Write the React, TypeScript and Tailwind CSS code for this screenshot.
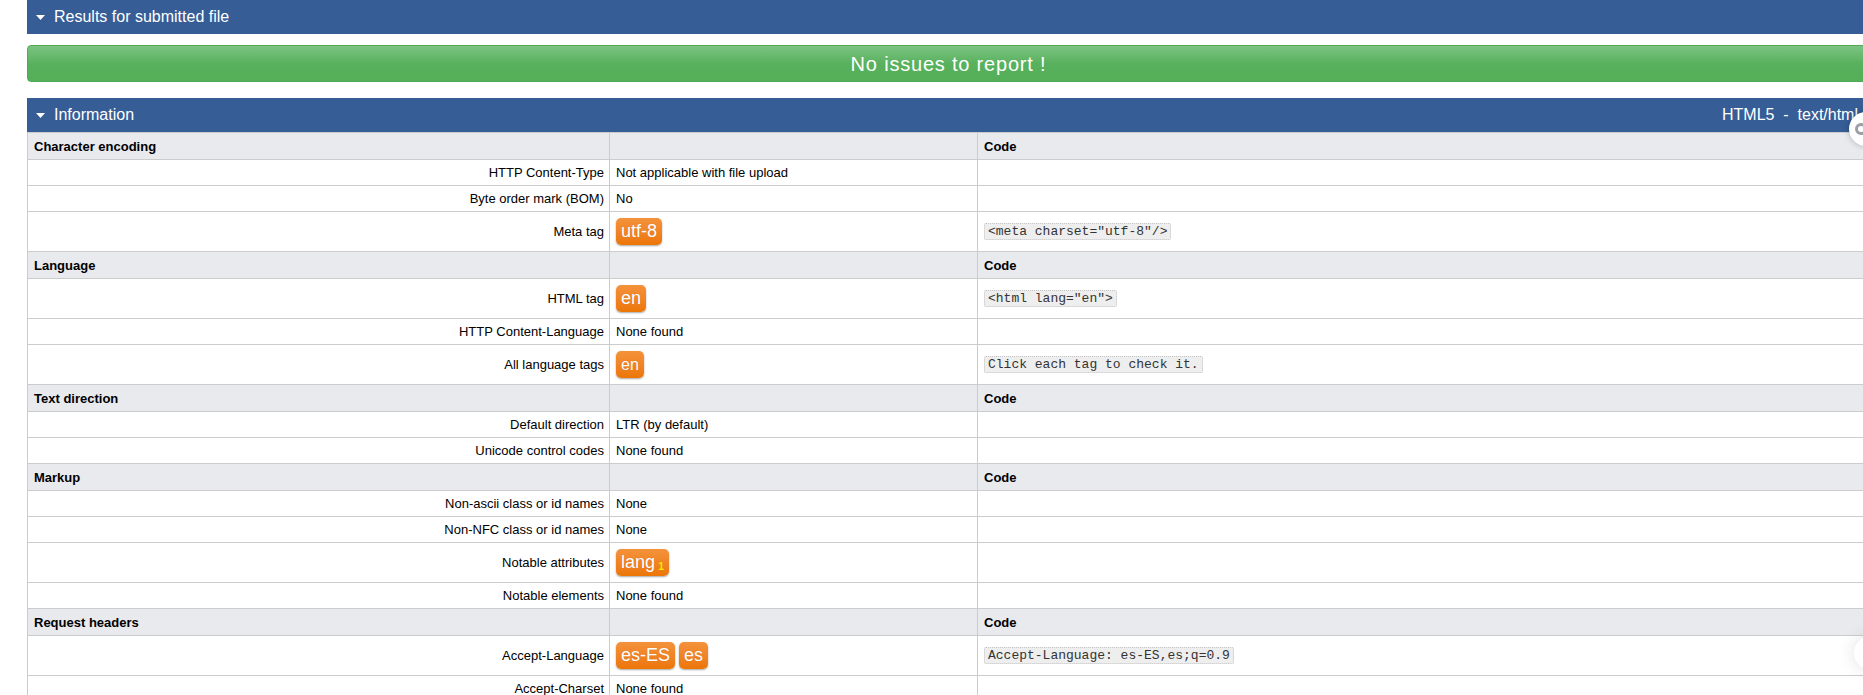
import React from "react";

type Cell = { kind: "text"; text: string } | { kind: "badges"; items: { label: string; sub?: string; small?: boolean }[] };

type Row =
  | { type: "head"; title: string }
  | { type: "item"; label: string; value: Cell; code?: string };

const rows: Row[] = [
  { type: "head", title: "Character encoding" },
  { type: "item", label: "HTTP Content-Type", value: { kind: "text", text: "Not applicable with file upload" } },
  { type: "item", label: "Byte order mark (BOM)", value: { kind: "text", text: "No" } },
  { type: "item", label: "Meta tag", value: { kind: "badges", items: [{ label: "utf-8" }] }, code: '<meta charset="utf-8"/>' },
  { type: "head", title: "Language" },
  { type: "item", label: "HTML tag", value: { kind: "badges", items: [{ label: "en" }] }, code: '<html lang="en">' },
  { type: "item", label: "HTTP Content-Language", value: { kind: "text", text: "None found" } },
  { type: "item", label: "All language tags", value: { kind: "badges", items: [{ label: "en", small: true }] }, code: "Click each tag to check it." },
  { type: "head", title: "Text direction" },
  { type: "item", label: "Default direction", value: { kind: "text", text: "LTR (by default)" } },
  { type: "item", label: "Unicode control codes", value: { kind: "text", text: "None found" } },
  { type: "head", title: "Markup" },
  { type: "item", label: "Non-ascii class or id names", value: { kind: "text", text: "None" } },
  { type: "item", label: "Non-NFC class or id names", value: { kind: "text", text: "None" } },
  { type: "item", label: "Notable attributes", value: { kind: "badges", items: [{ label: "lang", sub: "1" }] } },
  { type: "item", label: "Notable elements", value: { kind: "text", text: "None found" } },
  { type: "head", title: "Request headers" },
  { type: "item", label: "Accept-Language", value: { kind: "badges", items: [{ label: "es-ES" }, { label: "es" }] }, code: "Accept-Language: es-ES,es;q=0.9" },
  { type: "item", label: "Accept-Charset", value: { kind: "text", text: "None found" } },
];

function Caret() {
  return (
    <svg width="9" height="5" viewBox="0 0 9 5" className="shrink-0">
      <polygon points="0,0 9,0 4.5,5" fill="#ffffff" />
    </svg>
  );
}

function SectionBar({ title, right }: { title: string; right?: string }) {
  return (
    <div className="flex h-[34px] items-center bg-[#365d96] pl-[9px] pr-[12px] text-[16px] text-white">
      <Caret />
      <span className="ml-[9px]">{title}</span>
      {right && <span className="ml-auto whitespace-pre">{right}</span>}
    </div>
  );
}

function Badge({ label, sub, small }: { label: string; sub?: string; small?: boolean }) {
  return (
    <span
      className={
        "inline-flex h-[27px] items-center rounded-[5px] bg-gradient-to-b from-[#f4923a] to-[#ec7604] text-white shadow-[0_1px_2px_rgba(0,0,0,0.35)] [text-shadow:0_0_1px_rgba(0,0,0,0.15)] " +
        (small ? "px-[5px] text-[16px]" : "px-[5px] text-[18px]")
      }
    >
      {label}
      {sub && <span className="ml-[3px] mt-[7px] text-[11px] font-bold text-[#ffe600]">{sub}</span>}
    </span>
  );
}

export default function App() {
  return (
    <div className="relative h-[695px] w-[1863px] overflow-hidden bg-white font-['Liberation_Sans',Arial,sans-serif] text-black">
      <div className="ml-[27px] w-[1843px]">
        <SectionBar title="Results for submitted file" />

        <div className="mt-[11px] flex h-[37px] items-center justify-center rounded-[4px] border border-[#4fa955] bg-gradient-to-b from-[#7cc383] via-[#58b15d] to-[#54af59] text-[20px] tracking-[0.04em] text-white">
          No issues to report !
        </div>

        <div className="mt-[16px]">
          <SectionBar title="Information" right="HTML5  -  text/html" />
          <table className="w-full table-fixed border-collapse text-[13px] leading-[15px]">
            <colgroup>
              <col className="w-[582px]" />
              <col className="w-[368px]" />
              <col />
            </colgroup>
            <tbody>
              {rows.map((row, i) =>
                row.type === "head" ? (
                  <tr key={i} className="h-[27px] bg-[#e9eaee]">
                    <td className="border border-[#cccccc] px-[6px] font-bold">{row.title}</td>
                    <td className="border border-[#cccccc]"></td>
                    <td className="border border-[#cccccc] px-[6px] font-bold">Code</td>
                  </tr>
                ) : (
                  <tr key={i} className={row.value.kind === "badges" ? "h-[40px]" : "h-[26px]"}>
                    <td className="border border-[#cccccc] px-[5px] text-right">{row.label}</td>
                    <td className="border border-[#cccccc] px-[6px]">
                      {row.value.kind === "text" ? (
                        row.value.text
                      ) : (
                        <div className="flex gap-[4px]">
                          {row.value.items.map((b) => (
                            <Badge key={b.label} {...b} />
                          ))}
                        </div>
                      )}
                    </td>
                    <td className="border border-[#cccccc] px-[6px]">
                      {row.code && (
                        <code className="inline-block rounded-[2px] border border-dotted border-[#c4c4c4] bg-[#eeeeee] px-[3px] font-['Liberation_Mono','Courier_New',monospace] text-[13px] leading-[15px] text-[#333333]">
                          {row.code}
                        </code>
                      )}
                    </td>
                  </tr>
                )
              )}
            </tbody>
          </table>
        </div>
      </div>

      {/* floating extension buttons at the right edge */}
      <div className="absolute left-[1849px] top-[112px] flex h-[34px] w-[34px] items-center rounded-full bg-white pl-[6px] shadow-[0_0_6px_rgba(0,0,0,0.25)]">
        <span className="block h-[12px] w-[12px] rounded-full border-[3px] border-[#9aa0a6]"></span>
      </div>
      <div className="absolute left-[1854px] top-[636px] h-[34px] w-[34px] rounded-full bg-white shadow-[0_0_18px_rgba(0,0,0,0.12)]"></div>
    </div>
  );
}
